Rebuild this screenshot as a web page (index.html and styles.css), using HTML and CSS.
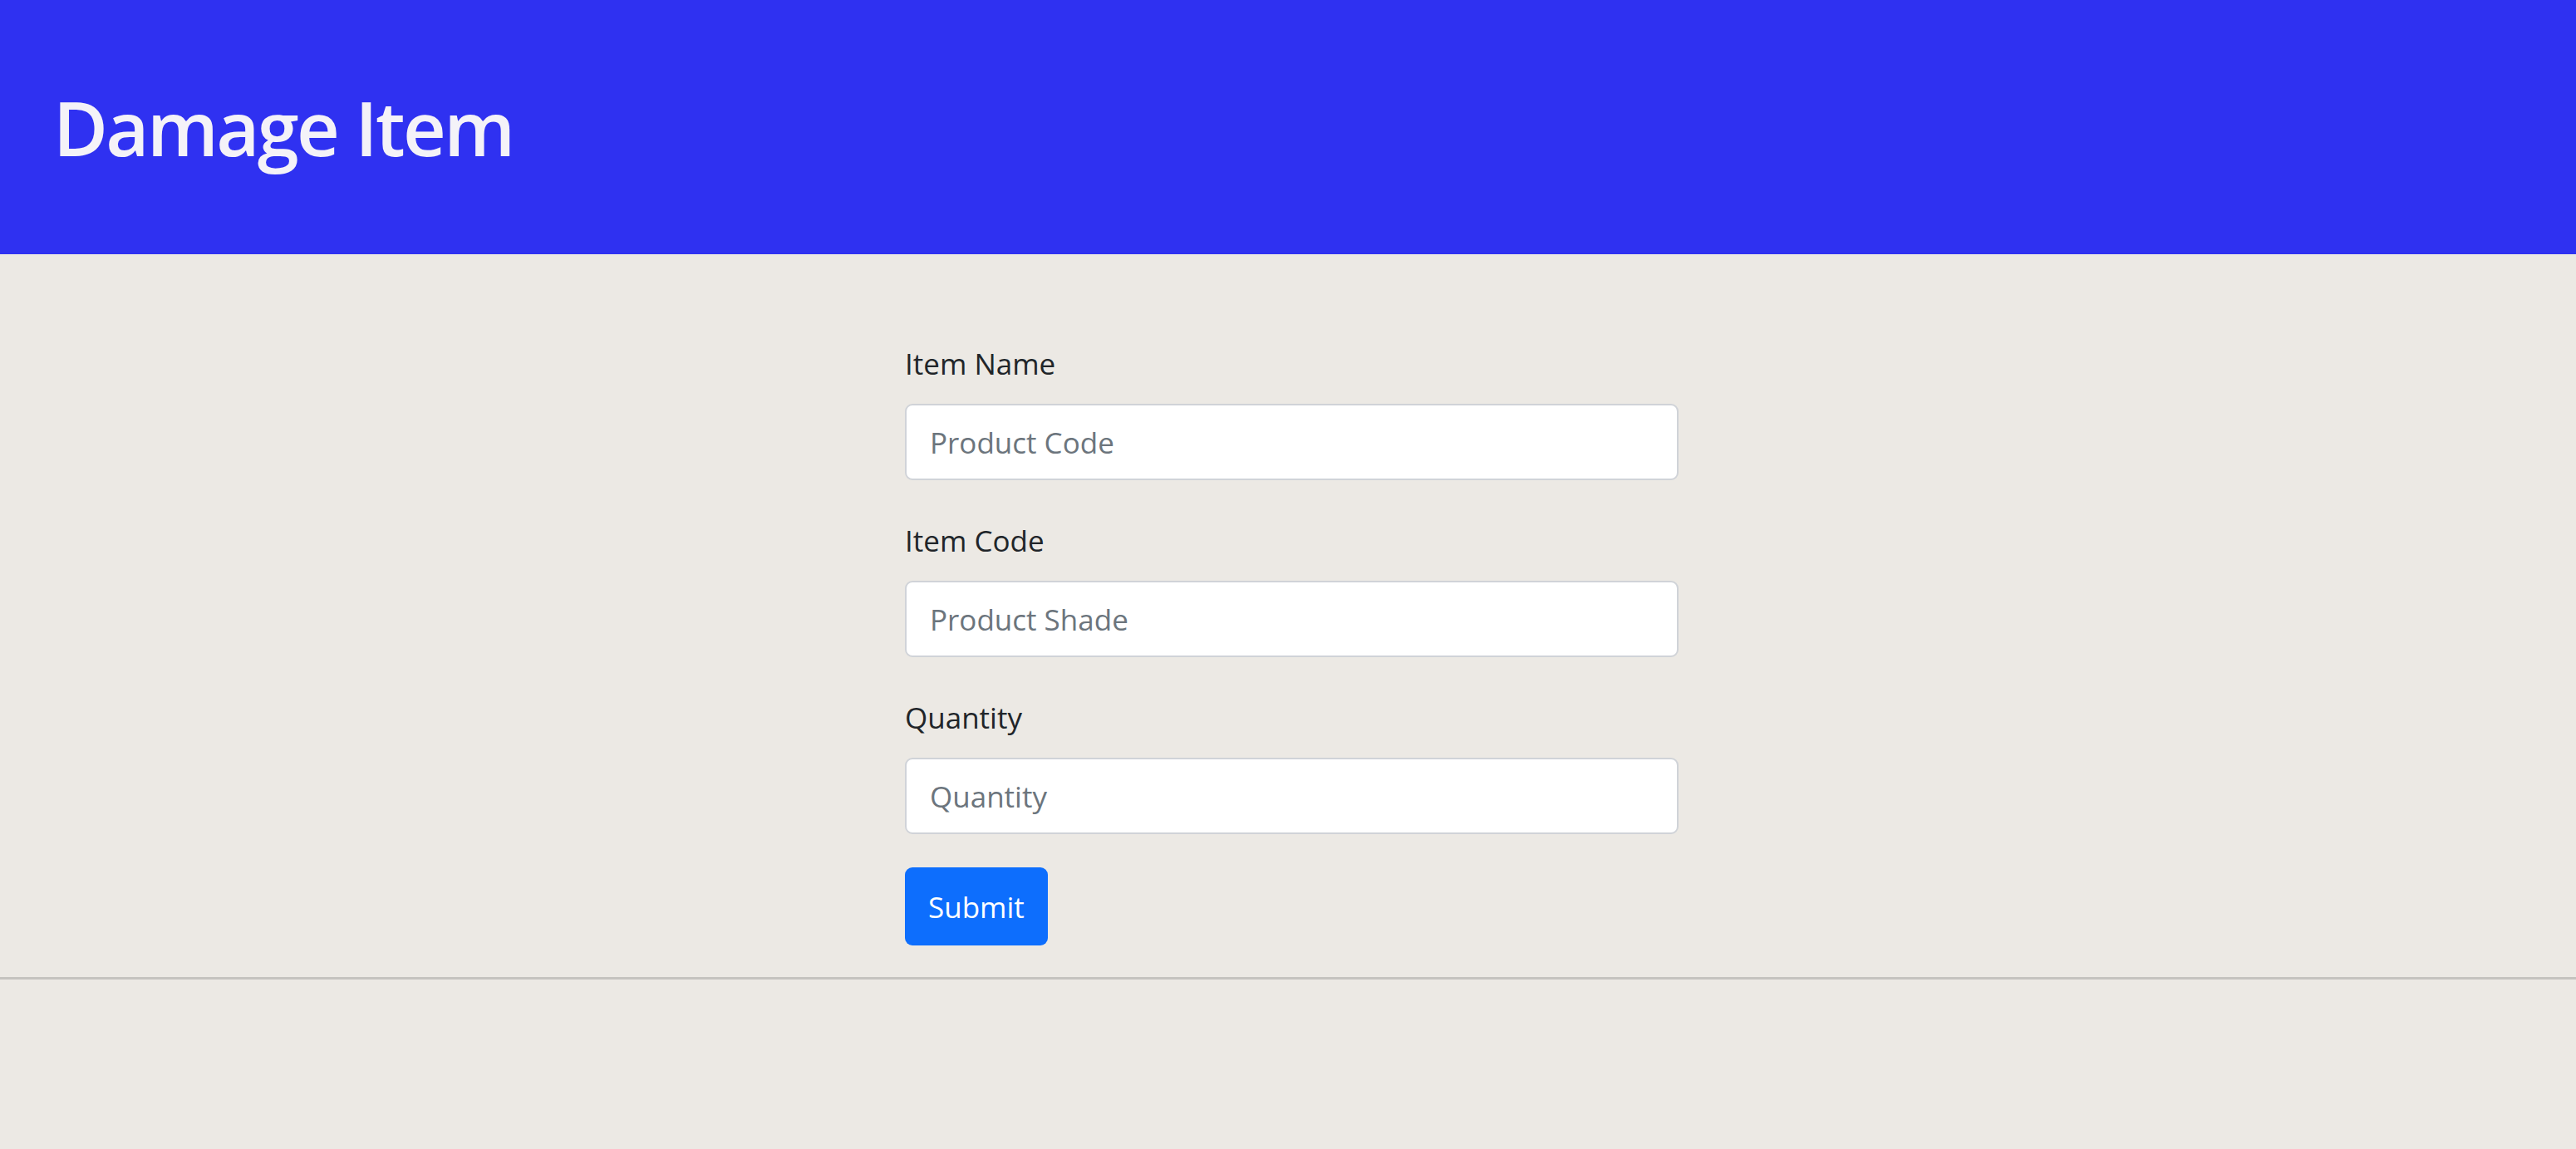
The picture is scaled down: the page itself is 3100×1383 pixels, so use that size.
FILE: index.html
```html
<!DOCTYPE html>
<html lang="en">
<head>
<meta charset="utf-8">
<title>Damage Item</title>
<link rel="stylesheet" href="styles.css">
</head>
<body>
<header class="topbar">
  <h1 class="title">Damage Item</h1>
</header>
<main class="content">
  <form class="form">
    <div class="group">
      <label class="label" for="name">Item Name</label>
      <input class="input" id="name" type="text" placeholder="Product Code">
    </div>
    <div class="group">
      <label class="label" for="code">Item Code</label>
      <input class="input" id="code" type="text" placeholder="Product Shade">
    </div>
    <div class="group group-last">
      <label class="label" for="qty">Quantity</label>
      <input class="input" id="qty" type="text" placeholder="Quantity">
    </div>
    <button class="btn" type="button">Submit</button>
  </form>
  <hr class="rule">
</main>
</body>
</html>
```

FILE: styles.css
```css
* { box-sizing: border-box; }
html, body { margin: 0; padding: 0; }
body {
  background: #ece9e4;
  font-family: "Open Sans", "Noto Sans", sans-serif;
  color: #212529;
  min-height: 1383px;
}
.topbar {
  background: #2f31f1;
  height: 306px;
  display: flex;
  align-items: center;
  padding-left: 64px;
}
.title {
  margin: 0;
  color: #f4f2f8;
  font-size: 90px;
  font-weight: 600;
  line-height: 1.2;
  letter-spacing: -2.6px;
}
.content {
  padding-top: 103px;
}
.form {
  width: 931px;
  margin-left: calc(50% - 461px);
}
.group {
  display: flex;
  flex-direction: column;
  margin-bottom: 44px;
}
.group-last {
  margin-bottom: 40px;
}
.label {
  font-size: 35px;
  line-height: 58px;
  margin-bottom: 19px;
  color: #212529;
}
.input {
  height: 92px;
  width: 100%;
  border: 2px solid #d0d3d8;
  border-radius: 9px;
  background: #fff;
  padding: 0 28px;
  font-family: "Open Sans", "Noto Sans", sans-serif;
  font-size: 35px;
  color: #212529;
  outline: none;
}
.input::placeholder { color: #6c757d; opacity: 1; }
.btn {
  height: 94px;
  padding: 0 28px;
  border: 0;
  border-radius: 9px;
  background: #0d6efd;
  color: #fff;
  font-family: "Open Sans", "Noto Sans", sans-serif;
  font-size: 35px;
  cursor: pointer;
}
.rule {
  margin: 38px 0 0;
  border: 0;
  border-top: 3px solid #c5c3bf;
}
```
